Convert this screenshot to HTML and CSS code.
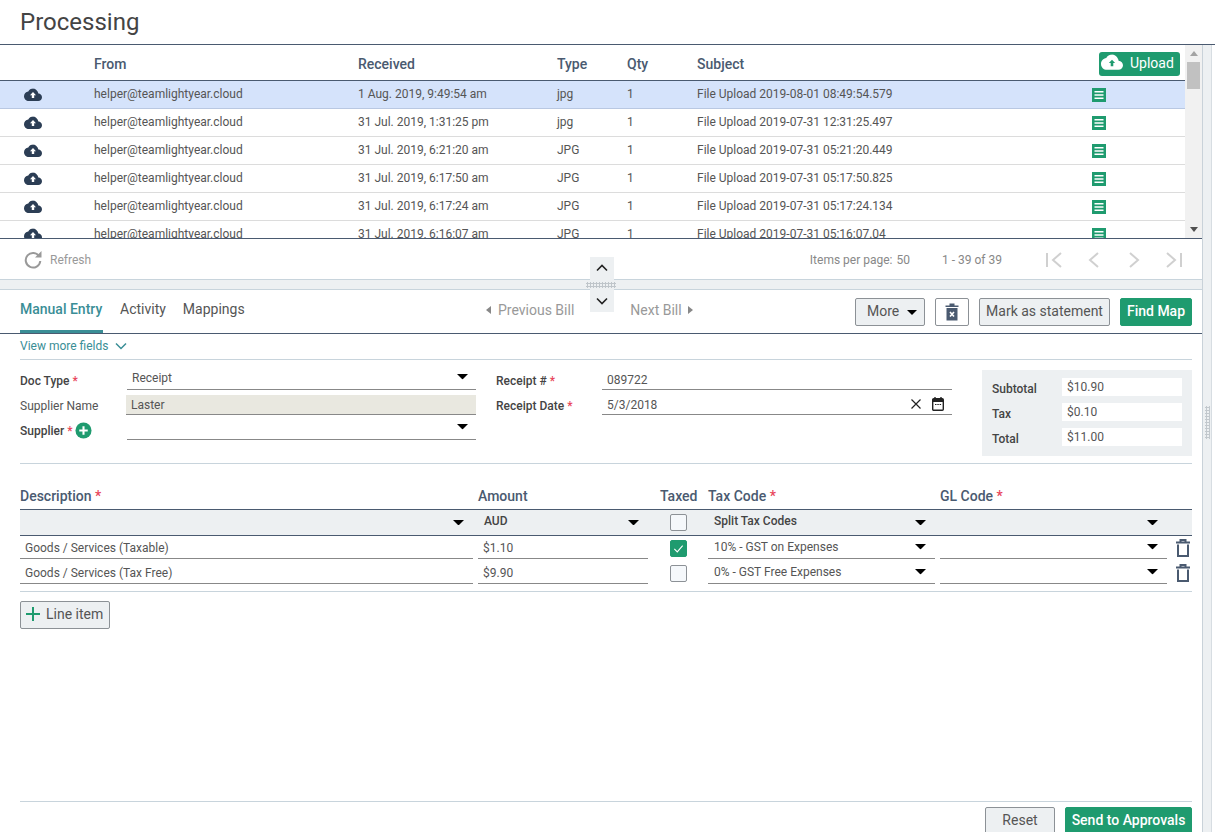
FILE: index.html
```html
<!DOCTYPE html>
<html lang="en">
<head>
<meta charset="utf-8">
<title>Processing</title>
<link rel="stylesheet" href="styles.css">
</head>
<body>
<svg class="defs" width="0" height="0" aria-hidden="true">
  <symbol id="cloud" viewBox="0 0 24 18"><path d="M19.2 7C18.4 3 15.100 0.300 12 0.300 9.300 0.300 6.900 1.800 5.700 4.200 2.500 4.600 0 7.200 0 10.500 0 14 2.900 17 6.500 17H19c2.800 0 5-2.200 5-5 0-2.600-2-4.800-4.800-5z"/></symbol>
  <symbol id="list" viewBox="0 0 14 14"><rect width="14" height="14" fill="#1f9b6f"/><path d="M2.500 3.800h9M2.500 7h9M2.500 10.200h9" stroke="#fff" stroke-width="1.500"/></symbol>
  <symbol id="trash" viewBox="0 0 14 18"><path d="M0 3.500h14M4.500 3.500V1h5v2.500M2 5.500v11.500h10V5.500" fill="none" stroke="#4a5a70" stroke-width="2"/></symbol>
  <symbol id="caret" viewBox="0 0 12 6"><path d="M0 0h12L6 6z"/></symbol>
</svg>
<div class="page">
  <header class="page-head"><h1>Processing</h1></header>
  <div class="split">
    <main class="left">
      <section class="grid-wrap">
        <div class="grid-body">
          <div class="grid-row grid-head">
            <span></span><span>From</span><span>Received</span><span>Type</span><span>Qty</span><span>Subject</span>
            <span class="upload-cell"><button class="btn-upload"><svg class="up-ic" viewBox="0 0 24 18"><use href="#cloud" fill="#fff"/><path d="M12 6l3.400 3.600h-2V13h-2.800V9.600h-2z" fill="#1f9b6f"/></svg>Upload</button></span>
          </div>
          <div class="grid-row selected">
            <svg class="cl" viewBox="0 0 24 18"><use href="#cloud" fill="#2c3e55"/><path d="M12 5l4 4.200h-2.400V13h-3.200V9.200H8z" fill="#fff"/></svg>
            <span>helper@teamlightyear.cloud</span><span>1 Aug. 2019, 9:49:54 am</span><span>jpg</span><span>1</span><span>File Upload 2019-08-01 08:49:54.579</span><svg class="li"><use href="#list"/></svg>
          </div>
          <div class="grid-row">
            <svg class="cl" viewBox="0 0 24 18"><use href="#cloud" fill="#2c3e55"/><path d="M12 5l4 4.200h-2.400V13h-3.200V9.200H8z" fill="#fff"/></svg>
            <span>helper@teamlightyear.cloud</span><span>31 Jul. 2019, 1:31:25 pm</span><span>jpg</span><span>1</span><span>File Upload 2019-07-31 12:31:25.497</span><svg class="li"><use href="#list"/></svg>
          </div>
          <div class="grid-row">
            <svg class="cl" viewBox="0 0 24 18"><use href="#cloud" fill="#2c3e55"/><path d="M12 5l4 4.200h-2.400V13h-3.200V9.200H8z" fill="#fff"/></svg>
            <span>helper@teamlightyear.cloud</span><span>31 Jul. 2019, 6:21:20 am</span><span>JPG</span><span>1</span><span>File Upload 2019-07-31 05:21:20.449</span><svg class="li"><use href="#list"/></svg>
          </div>
          <div class="grid-row">
            <svg class="cl" viewBox="0 0 24 18"><use href="#cloud" fill="#2c3e55"/><path d="M12 5l4 4.200h-2.400V13h-3.200V9.200H8z" fill="#fff"/></svg>
            <span>helper@teamlightyear.cloud</span><span>31 Jul. 2019, 6:17:50 am</span><span>JPG</span><span>1</span><span>File Upload 2019-07-31 05:17:50.825</span><svg class="li"><use href="#list"/></svg>
          </div>
          <div class="grid-row">
            <svg class="cl" viewBox="0 0 24 18"><use href="#cloud" fill="#2c3e55"/><path d="M12 5l4 4.200h-2.400V13h-3.200V9.200H8z" fill="#fff"/></svg>
            <span>helper@teamlightyear.cloud</span><span>31 Jul. 2019, 6:17:24 am</span><span>JPG</span><span>1</span><span>File Upload 2019-07-31 05:17:24.134</span><svg class="li"><use href="#list"/></svg>
          </div>
          <div class="grid-row">
            <svg class="cl" viewBox="0 0 24 18"><use href="#cloud" fill="#2c3e55"/><path d="M12 5l4 4.200h-2.400V13h-3.200V9.200H8z" fill="#fff"/></svg>
            <span>helper@teamlightyear.cloud</span><span>31 Jul. 2019, 6:16:07 am</span><span>JPG</span><span>1</span><span>File Upload 2019-07-31 05:16:07.04</span><svg class="li"><use href="#list"/></svg>
          </div>
        </div>
        <div class="scrollbar"><i class="sb-up"></i><i class="sb-thumb"></i><i class="sb-down"></i></div>
      </section>

      <section class="pager">
        <svg class="refresh" viewBox="0 0 18 18"><path d="M15.300 5.500A7.300 7.300 0 1 0 16.300 10" fill="none" stroke="#999" stroke-width="2"/><path d="M11 6.500h6.500V0z" fill="#999"/></svg>
        <span class="refresh-label">Refresh</span>
        <span class="items"><span>Items per page:</span><span>50</span></span>
        <span class="range">1 - 39 of 39</span>
        <svg class="pg pg-first" viewBox="0 0 16 16"><path d="M1 1v14M15 1L7 8l8 7" fill="none" stroke="#d0d0d0" stroke-width="2"/></svg>
        <svg class="pg pg-prev" viewBox="0 0 16 16"><path d="M12 1L4 8l8 7" fill="none" stroke="#d0d0d0" stroke-width="2"/></svg>
        <svg class="pg pg-next" viewBox="0 0 16 16"><path d="M4 1l8 7-8 7" fill="none" stroke="#d0d0d0" stroke-width="2"/></svg>
        <svg class="pg pg-last" viewBox="0 0 16 16"><path d="M15 1v14M1 1l8 7-8 7" fill="none" stroke="#d0d0d0" stroke-width="2"/></svg>
      </section>

      <div class="hsplit">
        <div class="collapse">
          <svg class="chev" viewBox="0 0 12 8"><path d="M1 6.500l5-5 5 5" fill="none" stroke="#222" stroke-width="1.600"/></svg>
          <svg class="chev" viewBox="0 0 12 8"><path d="M1 1.500l5 5 5-5" fill="none" stroke="#222" stroke-width="1.600"/></svg>
        </div>
        <i class="hdots"></i>
      </div>

      <nav class="tabs">
        <a class="tab active">Manual Entry</a>
        <a class="tab">Activity</a>
        <a class="tab">Mappings</a>
        <div class="bill-nav">
          <span class="bill prev"><i class="tri-l"></i>Previous Bill</span>
          <span class="bill next">Next Bill<i class="tri-r"></i></span>
        </div>
        <div class="actions">
          <button class="btn btn-more">More<svg class="caret-sm"><use href="#caret"/></svg></button>
          <button class="btn btn-del"><svg viewBox="0 0 14 18" class="del-ic"><path d="M0.500 2.500h13v1.500h-13zM4.500 0.500h5v2h-5z" fill="#4a5a70"/><path d="M1.500 5h11v12.500h-11z" fill="#4a5a70"/><path d="M5 9l4 4.500M9 9l-4 4.500" stroke="#fff" stroke-width="1.600"/></svg></button>
          <button class="btn btn-mark">Mark as statement</button>
          <button class="btn btn-green">Find Map</button>
        </div>
      </nav>

      <div class="content">
        <div class="more-fields">View more fields<svg class="chev-teal" viewBox="0 0 12 8"><path d="M1 1.500l5 5 5-5" fill="none" stroke="#3a8e96" stroke-width="1.500"/></svg></div>

        <div class="form">
          <div class="form-col col-a">
            <label class="lbl strong">Doc Type <em>*</em></label>
            <div class="field select"><span>Receipt</span><svg class="caret"><use href="#caret"/></svg></div>
            <label class="lbl">Supplier Name</label>
            <div class="field readonly"><span>Laster</span></div>
            <label class="lbl strong">Supplier <em>*</em><svg class="plus" viewBox="0 0 18 18"><circle cx="9" cy="9" r="8.500" fill="#1f9b6f"/><path d="M9 4.500v9M4.500 9h9" stroke="#fff" stroke-width="2.200"/></svg></label>
            <div class="field select"><span></span><svg class="caret"><use href="#caret"/></svg></div>
          </div>
          <div class="form-col col-b">
            <label class="lbl strong">Receipt # <em>*</em></label>
            <div class="field"><span>089722</span></div>
            <label class="lbl strong">Receipt Date <em>*</em></label>
            <div class="field date"><span>5/3/2018</span>
              <svg class="x-ic" viewBox="0 0 10 10"><path d="M0.500 0.500l9 9M9.500 0.500l-9 9" stroke="#222" stroke-width="1.200"/></svg>
              <svg class="cal-ic" viewBox="0 0 12 14"><path d="M3 0v2.500M9 0v2.500" stroke="#222" stroke-width="1.400"/><rect x="0.700" y="1.700" width="10.600" height="11.600" rx="1" fill="none" stroke="#222" stroke-width="1.400"/><path d="M1 2h10v3H1z" fill="#222"/><path d="M3 7.500h1.500M5.300 7.500h1.500M7.600 7.500h1.500" stroke="#222"/></svg>
            </div>
          </div>
          <div class="totals">
            <span class="t-lbl">Subtotal</span><span class="t-val">$10.90</span>
            <span class="t-lbl">Tax</span><span class="t-val">$0.10</span>
            <span class="t-lbl">Total</span><span class="t-val">$11.00</span>
          </div>
        </div>

        <div class="lines">
          <div class="line-grid line-labels">
            <span>Description <em>*</em></span><span>Amount</span><span class="taxed">Taxed</span><span>Tax Code <em>*</em></span><span>GL Code <em>*</em></span><span></span>
          </div>
          <div class="line-grid line-head">
            <div class="lc"><span></span><svg class="caret"><use href="#caret"/></svg></div>
            <div class="lc lc-six"><span class="head-val">AUD</span><svg class="caret"><use href="#caret"/></svg></div>
            <div class="cb-cell"><i class="cb"></i></div>
            <div class="lc lc-six"><span class="head-val">Split Tax Codes</span><svg class="caret"><use href="#caret"/></svg></div>
            <div class="lc"><span></span><svg class="caret"><use href="#caret"/></svg></div>
            <span></span>
          </div>
          <div class="line-grid line-row">
            <div class="lc lc-text"><span>Goods / Services (Taxable)</span></div>
            <div class="lc lc-text"><span>$1.10</span></div>
            <div class="cb-cell"><i class="cb on"><svg viewBox="0 0 18 18"><path d="M4 9.500l3.500 3.500L14 5.500" fill="none" stroke="#fff" stroke-width="1.300"/></svg></i></div>
            <div class="lc lc-six"><span>10% - GST on Expenses</span><svg class="caret"><use href="#caret"/></svg></div>
            <div class="lc"><span></span><svg class="caret"><use href="#caret"/></svg></div>
            <svg class="trash"><use href="#trash"/></svg>
          </div>
          <div class="line-grid line-row line-last">
            <div class="lc lc-text"><span>Goods / Services (Tax Free)</span></div>
            <div class="lc lc-text"><span>$9.90</span></div>
            <div class="cb-cell"><i class="cb"></i></div>
            <div class="lc lc-six"><span>0% - GST Free Expenses</span><svg class="caret"><use href="#caret"/></svg></div>
            <div class="lc"><span></span><svg class="caret"><use href="#caret"/></svg></div>
            <svg class="trash"><use href="#trash"/></svg>
          </div>
        </div>

        <div class="add-row">
          <button class="btn btn-add"><svg viewBox="0 0 14 14" class="add-ic"><path d="M7 0v14M0 7h14" stroke="#1f9b6f" stroke-width="2"/></svg>Line item</button>
        </div>

        <footer class="foot">
          <button class="btn btn-reset">Reset</button>
          <button class="btn btn-green btn-send">Send to Approvals</button>
        </footer>
      </div>
    </main>
    <aside class="vsplit"><i class="vdots"></i></aside>
  </div>
</div>
</body>
</html>
```
FILE: styles.css
```css
* { box-sizing: border-box; }
html, body { margin: 0; height: 100%; overflow: hidden; background: #fff; }
body { font-family: Roboto, "Liberation Sans", sans-serif; color: #555; font-size: 12px; }
button { font-family: inherit; cursor: default; }
em { color: #e8455a; font-style: normal; }
.defs { position: absolute; }

.page { height: 832px; display: flex; flex-direction: column; }
.page-head { height: 45px; flex: none; border-bottom: 1px solid #4a5a70; padding-left: 20px; }
.page-head h1 { margin: 0; font-size: 24px; line-height: 44px; font-weight: 400; color: #444; }

.split { flex: 1; display: flex; min-height: 0; }
.left { width: 1203px; flex: none; display: flex; flex-direction: column; border-right: 1px solid #c9d2d9; min-height: 0; }
.vsplit { flex: none; width: 9px; background: #edf0f2; border-right: 1px solid #d7dde2; position: relative; display: flex; align-items: center; }
.vdots { display: block; width: 5px; height: 33px; margin: -32px 0 0 2px; background-image: radial-gradient(#c2c8cd 1px, transparent 1.100px); background-size: 3px 3px; }

.grid-wrap { height: 194px; flex: none; display: flex; border-bottom: 1px solid #4a5a70; }
.grid-body { width: 1185px; flex: none; overflow: hidden; }
.grid-row { display: grid; grid-template-columns: 94px 264px 199px 70px 70px 395px 93px; height: 28px; padding-bottom: 1px; align-items: center; border-bottom: 1px solid #dcdcdc; color: #555; font-size: 12px; }
.grid-row.selected { background: #d5e3fb; border-bottom-color: #b9c8e2; }
.grid-head { height: 36px; padding: 2px 0 0; border-bottom: 1px solid #4a5a70; font-size: 14px; font-weight: 500; color: #4a5a70; }
.upload-cell { display: flex; }
.btn-upload { margin-left: 7px; width: 81px; height: 24px; border: 0; border-radius: 3px; background: #1f9b6f; color: #fff; font-size: 14px; display: flex; align-items: center; padding: 0 0 2px 2px; gap: 7px; font-weight: 400; }
.up-ic { width: 22px; height: 17px; }
.cl { width: 18px; height: 14px; margin-left: 24px; margin-top: 1px; }
.li { width: 14px; height: 14px; margin-top: 1px; }

.scrollbar { flex: 1; background: #f1f1f1; position: relative; display: flex; flex-direction: column; align-items: center; padding-top: 6px; }
.sb-up { width: 0; height: 0; border: 4px solid transparent; border-top: 0; border-bottom: 5px solid #a3a3a3; }
.sb-thumb { width: 13px; height: 27px; background: #c1c1c1; margin-top: 6px; }
.sb-down { width: 0; height: 0; border: 4px solid transparent; border-bottom: 0; border-top: 5px solid #505050; margin-top: auto; margin-bottom: 6px; }

.pager { height: 40px; flex: none; display: flex; align-items: center; padding: 1px 0 0 24px; color: #999; font-size: 12px; }
.refresh { width: 18px; height: 18px; }
.refresh-label { margin-left: 8px; }
.items { margin-left: auto; color: #888; display: flex; gap: 4px; }
.range { margin-left: 32px; color: #888; width: 104px; }
.pg { width: 16px; height: 16px; flex: none; }
.pg-first { margin-left: 0; }
.pg-prev { margin-left: 24px; }
.pg-next { margin-left: 24px; }
.pg-last { margin-left: 24px; margin-right: 20px; }

.hsplit { height: 11px; flex: none; background: #edf0f2; border-top: 1px solid #c8d4dc; border-bottom: 1px solid #c8d4dc; position: relative; }
.collapse { position: absolute; left: 590px; top: -23px; width: 24px; height: 55px; background: #edf0f2; display: flex; flex-direction: column; justify-content: space-between; align-items: center; padding: 7px 0 7px; }
.chev { width: 12px; height: 8px; }
.hdots { position: absolute; left: 586px; top: 2px; width: 30px; height: 6px; background-image: radial-gradient(#bfc5ca 1px, transparent 1.100px); background-size: 3px 3px; }

.tabs { height: 44px; flex: none; border-bottom: 1px solid #4a5a70; display: flex; align-items: stretch; padding-left: 20px; position: relative; font-size: 14px; }
.tab { display: flex; align-items: center; color: #555; margin-right: 17px; padding-bottom: 6px; height: 43px; }
.tab.active { width: 83px; color: #3a8e96; font-weight: 500; border-bottom: 3px solid #3a8e96; padding-bottom: 3px; }
.bill-nav { position: absolute; left: 486px; top: 0; height: 40px; display: flex; align-items: center; gap: 56px; color: #999; }
.bill { display: flex; align-items: center; }
.tri-l { width: 0; height: 0; border: 4px solid transparent; border-left: 0; border-right: 5px solid #888; margin-right: 7px; }
.tri-r { width: 0; height: 0; border: 4px solid transparent; border-right: 0; border-left: 5px solid #888; margin-left: 6px; }
.actions { margin-left: auto; display: flex; gap: 10px; padding: 8px 10px 0 0; height: 36px; }

.btn { height: 28px; border: 1px solid #8c9196; border-radius: 2px; background: #edf0f2; color: #555; font-size: 14px; padding: 0 0 2px; }
.btn-more { width: 70px; display: flex; align-items: center; gap: 8px; padding-left: 11px; }
.caret-sm { width: 10px; height: 5px; margin-top: 2px; }
.btn-del { width: 34px; background: #fff; display: flex; align-items: center; justify-content: center; padding: 0; }
.del-ic { width: 14px; height: 18px; }
.btn-mark { width: 131px; }
.btn-green { width: 72px; background: #1f9b6f; border-color: #1f9b6f; color: #fff; font-weight: 500; }

.content { flex: 1; min-height: 0; display: flex; flex-direction: column; padding: 0 10px 0 20px; }
.more-fields { height: 26px; flex: none; border-bottom: 1px solid #c8d4dc; color: #3a8e96; display: flex; align-items: center; gap: 7px; padding-bottom: 2px; }
.chev-teal { width: 12px; height: 8px; }

.form { height: 104px; flex: none; border-bottom: 1px solid #c8d4dc; display: flex; padding-top: 5px; }
.form-col { display: grid; grid-auto-rows: 25px; align-content: start; }
.col-a { width: 456px; grid-template-columns: 107px 349px; }
.col-b { width: 456px; margin-left: 20px; grid-template-columns: 106px 350px; }
.col-b .field { padding-top: 6px; }
.col-b .field svg { margin-top: -2px; }
.lbl { display: flex; align-items: center; color: #555; font-size: 12px; padding-top: 6px; white-space: pre; }
.lbl.strong { font-weight: 500; color: #444; }
.plus { width: 17px; height: 17px; margin-left: 2px; }
.field { display: flex; align-items: center; border-bottom: 1px solid #888; padding: 0 5px; color: #555; font-size: 12px; justify-content: space-between; height: 25px; }
.select { padding: 1px 8px 0 5px; }
.select .caret { margin-top: -1px; }
.readonly { background: #e9e8e0; margin-left: -1px; height: 20px; margin-top: 5px; }
.caret { width: 11px; height: 5.500px; flex: none; }
.x-ic { width: 10px; height: 10px; margin-left: auto; margin-right: 11px; }
.cal-ic { width: 12px; height: 14px; margin-right: 3px; }
.totals { width: 210px; height: 86px; margin: 5px 0 0 30px; background: #edf0f2; display: grid; grid-template-columns: 70px 120px; grid-auto-rows: 18px; row-gap: 7px; padding: 8px 10px; align-items: center; }
.t-lbl { font-weight: 500; color: #444; padding-top: 4px; }
.t-val { background: #fff; padding-left: 5px; color: #555; height: 18px; line-height: 19px; }

.line-grid { display: grid; grid-template-columns: 453px 170px 50px 227px 227px 20px; column-gap: 5px; }
.line-labels { height: 45px; align-items: end; padding-bottom: 5px; font-size: 14px; font-weight: 500; color: #4a5a70; }
.taxed { margin-left: 7px; white-space: nowrap; }
.line-head { height: 27px; background: #edf0f2; border-top: 1px solid #4a5a70; border-bottom: 1px solid #4a5a70; font-weight: 500; color: #444; }
.head-val { padding-bottom: 3px; }
.line-row { height: 25px; }
.lc { display: flex; align-items: center; justify-content: space-between; padding: 0 9px 0 5px; }
.lc-six { padding-left: 6px; }
.line-row .lc { border-bottom: 1px solid #888; height: 23px; }
.line-row .lc-text { padding-top: 2px; }
.line-row.line-last { height: 31px; border-bottom: 1px solid #c8d4dc; padding-bottom: 5px; }
.cb-cell { display: flex; align-items: center; justify-content: flex-end; padding-right: 16px; }
.cb { display: block; width: 17px; height: 17px; border: 1px solid #8c9196; border-radius: 2px; background: #f5f8fb; }
.cb.on { background: #1f9b6f; border-color: #1f9b6f; }
.cb svg { display: block; width: 15px; height: 15px; }
.trash { width: 14px; height: 18px; margin: 3px 0 0 4px; }

.add-row { padding-top: 9px; flex: 1; min-height: 0; }
.btn-add { width: 90px; display: flex; align-items: center; padding-left: 5px; gap: 6px; }
.add-ic { width: 14px; height: 14px; }

.foot { height: 31px; flex: none; border-top: 1px solid #c8d4dc; display: flex; justify-content: flex-end; gap: 10px; padding-top: 5px; }
.btn-reset { width: 70px; }
.btn-send { width: 127px; }
```
